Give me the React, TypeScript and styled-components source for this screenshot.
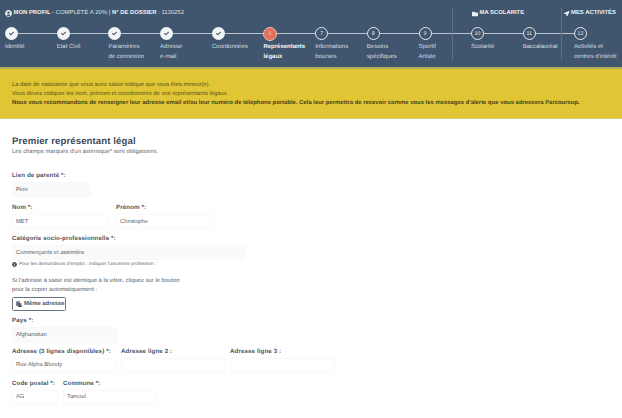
import React from "react";
import styled, { createGlobalStyle } from "styled-components";
import { FaCheck, FaUserCircle, FaFolder, FaLocationArrow, FaInfoCircle, FaPaste } from "react-icons/fa";

const Global = createGlobalStyle`
  html, body { margin: 0; padding: 0; background: #fff; height: 418px; overflow: hidden; }
  body { font-family: "Liberation Sans", Arial, sans-serif; color: #4a5563; text-rendering: geometricPrecision; }
`;

const Header = styled.header`
  display: flex;
  height: 67px;
  background: #3f566e;
  color: #dfe5ea;
`;
const Section = styled.section<{ $w: number; $pad: number; $divider?: boolean }>`
  width: ${(p) => p.$w}px;
  flex: none;
  box-sizing: border-box;
  padding: 9px 0 0 ${(p) => p.$pad}px;
  position: relative;
  ${(p) => (p.$divider ? "&::before { content: ''; position: absolute; left: 0; top: 8px; bottom: 7px; width: 1px; background: #5d7286; }" : "")}
`;
const SectionTitle = styled.div<{ $shift?: number }>`
  height: 9px;
  font-size: 5.9px;
  line-height: 9px;
  white-space: nowrap;
  display: flex;
  align-items: center;
  gap: 1.5px;
  margin-left: ${(p) => p.$shift ?? 0}px;
  b { font-weight: 700; color: #eef1f4; }
  svg { flex: none; }
`;
const Steps = styled.div`
  display: flex;
  margin-top: 9px;
`;
const Step = styled.div<{ $w: number }>`
  width: ${(p) => p.$w}px;
  flex: none;
  position: relative;
`;
const Connector = styled.span`
  position: absolute;
  left: 7px;
  top: 6px;
  width: 51.7px;
  height: 1px;
  background: #b9c6d2;
`;
const Circle = styled.div<{ $state: "done" | "current" | "todo" }>`
  position: relative;
  width: ${(p) => (p.$state === "current" ? 14 : 13)}px;
  height: ${(p) => (p.$state === "current" ? 14 : 13)}px;
  margin: ${(p) => (p.$state === "current" ? "-0.5px" : "0")};
  box-sizing: border-box;
  border-radius: 50%;
  display: flex;
  align-items: center;
  justify-content: center;
  font-size: 5.3px;
  color: ${(p) => (p.$state === "done" ? "#3f566e" : p.$state === "current" ? "#f3c9b8" : "#e6ebef")};
  background: ${(p) => (p.$state === "done" ? "#f3f5f6" : p.$state === "current" ? "#e2705c" : "#3f566e")};
  border: ${(p) => (p.$state === "done" ? "none" : p.$state === "current" ? "1.5px solid #f0c0b0" : "1px solid #e6ebef")};
`;
const StepLabel = styled.div<{ $active?: boolean }>`
  margin-top: 3px;
  font-size: 6px;
  line-height: 9.6px;
  font-weight: ${(p) => (p.$active ? 700 : 400)};
  color: ${(p) => (p.$active ? "#f3f5f7" : "#d5dde4")};
  white-space: nowrap;
`;

const Alert = styled.div`
  height: 52px;
  box-sizing: border-box;
  background: #e0c534;
  border-top: 2px solid #aeac5c;
  border-bottom: 1px solid #d9cc6e;
  padding: 11.5px 12px 0;
  font-size: 5.85px;
  line-height: 9.2px;
  color: #5a5120;
  white-space: nowrap;
  b { color: #4c4316; font-weight: 700; font-size: 5.92px; display: block; }
`;

const Main = styled.main`
  padding: 16px 12px 0;
`;
const Title = styled.h1`
  margin: 0;
  font-size: 9.6px;
  line-height: 13px;
  font-weight: 700;
  letter-spacing: 0.1px;
  color: #3e4c5c;
`;
const Sub = styled.p`
  margin: 0;
  font-size: 5.9px;
  line-height: 9px;
  color: #5f6873;
`;
const Row = styled.div<{ $mt: number; $gap?: number }>`
  display: flex;
  gap: ${(p) => p.$gap ?? 7}px;
  margin-top: ${(p) => p.$mt}px;
`;
const Field = styled.div<{ $w: number }>`
  width: ${(p) => p.$w}px;
  flex: none;
`;
const Label = styled.div`
  font-size: 6.15px;
  line-height: 9px;
  font-weight: 700;
  letter-spacing: 0.12px;
  color: #4d5764;
  white-space: nowrap;
`;
const Input = styled.div<{ $tinted?: boolean; $h?: number }>`
  margin-top: 2px;
  height: ${(p) => p.$h ?? 15}px;
  box-sizing: border-box;
  padding: 0 3px;
  display: flex;
  align-items: center;
  font-size: 5.8px;
  color: #555e69;
  background: ${(p) => (p.$tinted ? "#fafafa" : "#fff")};
  border: 1px solid #f9f9f9;
  border-radius: 1px;
  white-space: nowrap;
`;
const Help = styled.div`
  display: flex;
  align-items: center;
  gap: 2px;
  height: 9px;
  font-size: 4.9px;
  color: #5f6873;
`;
const Note = styled.p`
  margin: 7.5px 0 0;
  font-size: 5.85px;
  line-height: 9.6px;
  color: #555e69;
`;
const CopyButton = styled.button`
  display: flex;
  align-items: center;
  gap: 2px;
  margin-top: 1px;
  width: 54px;
  height: 14px;
  box-sizing: border-box;
  padding: 0 0 0 3px;
  background: #fff;
  border: 1px solid #6a7582;
  border-radius: 1.5px;
  font-family: inherit;
  font-size: 5.9px;
  font-weight: 700;
  color: #4d5764;
  white-space: nowrap;
  text-rendering: geometricPrecision;
`;

const steps: { label: React.ReactNode; active?: boolean }[] = [
  { label: "Identité" },
  { label: "Etat Civil" },
  { label: <>Paramètres<br />de connexion</> },
  { label: <>Adresse<br />e-mail</> },
  { label: "Coordonnées" },
  { label: <>Représentants<br />légaux</>, active: true },
  { label: <>Informations<br />bourses</> },
  { label: <>Besoins<br />spécifiques</> },
  { label: <>Sportif<br />Artiste</> },
  { label: "Scolarité" },
  { label: "Baccalauréat" },
  { label: <>Activités et<br />centres d'intérêt</> },
];

function StepItem({ i, w, last }: { i: number; w: number; last?: boolean }) {
  const s = steps[i];
  const n = i + 1;
  const state = n < 6 ? "done" : n === 6 ? "current" : "todo";
  return (
    <Step $w={w}>
      {!last && <Connector />}
      <Circle $state={state}>{n < 6 ? <FaCheck size={5} /> : n}</Circle>
      <StepLabel $active={s.active}>{s.label}</StepLabel>
    </Step>
  );
}

export default function App() {
  return (
    <>
      <Global />
      <Header>
        <Section $w={452} $pad={5}>
          <SectionTitle>
            <FaUserCircle size={7} color="#eef1f4" />
            <span>
              <b>MON PROFIL</b> - COMPLÉTÉ À 20% | <b>N° DE DOSSIER</b> : 1130252
            </span>
          </SectionTitle>
          <Steps>
            {[0, 1, 2, 3, 4, 5, 6, 7].map((i) => (
              <StepItem key={i} i={i} w={51.7} />
            ))}
            <StepItem i={8} w={32} />
          </Steps>
        </Section>
        <Section $w={109} $pad={19} $divider>
          <SectionTitle $shift={1}>
            <FaFolder size={6} color="#eef1f4" />
            <b>MA SCOLARITE</b>
          </SectionTitle>
          <Steps>
            <StepItem i={9} w={51.7} />
            <StepItem i={10} w={38} />
          </Steps>
        </Section>
        <Section $w={61} $pad={13} $divider>
          <SectionTitle $shift={-10}>
            <FaLocationArrow size={5.5} color="#eef1f4" />
            <b>MES ACTIVITÉS</b>
          </SectionTitle>
          <Steps>
            <StepItem i={11} w={48} last />
          </Steps>
        </Section>
      </Header>
      <Alert>
        La date de naissance que vous avez saisie indique que vous êtes mineur(e).
        <br />
        Vous devez indiquer les nom, prénom et coordonnées de vos représentants légaux
        <b>
          Nous vous recommandons de renseigner leur adresse email et/ou leur numéro de téléphone portable. Cela leur permettra de recevoir comme vous les messages d'alerte que vous adressera Parcoursup.
        </b>
      </Alert>
      <Main>
        <Title>Premier représentant légal</Title>
        <Sub>Les champs marqués d'un astérisque* sont obligatoires.</Sub>

        <Row $mt={14}>
          <Field $w={79}>
            <Label>Lien de parenté *:</Label>
            <Input $tinted>Père</Input>
          </Field>
        </Row>
        <Row $mt={6}>
          <Field $w={97}>
            <Label>Nom *:</Label>
            <Input>MET</Input>
          </Field>
          <Field $w={98}>
            <Label>Prénom *:</Label>
            <Input>Christophe</Input>
          </Field>
        </Row>
        <Row $mt={5}>
          <Field $w={234}>
            <Label>Catégorie socio-professionnelle *:</Label>
            <Input $tinted>Commerçants et assimilés</Input>
          </Field>
        </Row>
        <Help>
          <FaInfoCircle size={5} color="#3f4e5f" />
          Pour les demandeurs d'emploi : indiquer l'ancienne profession :
        </Help>
        <Note>
          Si l'adresse à saisir est identique à la vôtre, cliquez sur le bouton
          <br />
          pour la copier automatiquement :
        </Note>
        <CopyButton>
          <FaPaste size={6} color="#3f4e5f" />
          Même adresse
        </CopyButton>
        <Row $mt={5}>
          <Field $w={105}>
            <Label>Pays *:</Label>
            <Input $tinted $h={16}>Afghanistan</Input>
          </Field>
        </Row>
        <Row $mt={4} $gap={4}>
          <Field $w={105}>
            <Label>Adresse (3 lignes disponibles) *:</Label>
            <Input>Rue Alpha Blondy</Input>
          </Field>
          <Field $w={105}>
            <Label>Adresse ligne 2 :</Label>
            <Input />
          </Field>
          <Field $w={105}>
            <Label>Adresse ligne 3 :</Label>
            <Input />
          </Field>
        </Row>
        <Row $mt={6} $gap={5}>
          <Field $w={46}>
            <Label>Code postal *:</Label>
            <Input>AG</Input>
          </Field>
          <Field $w={94}>
            <Label>Commune *:</Label>
            <Input>Tamoul</Input>
          </Field>
        </Row>
      </Main>
    </>
  );
}
